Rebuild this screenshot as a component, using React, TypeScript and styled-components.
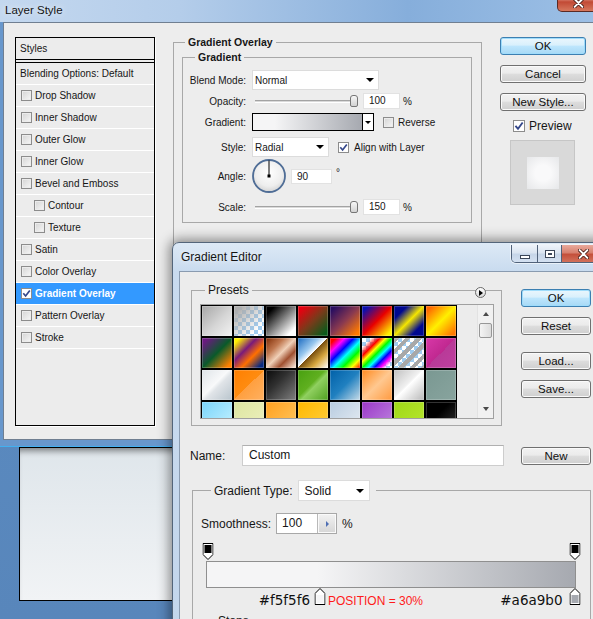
import styled, { createGlobalStyle } from "styled-components";

const GlobalStyle = createGlobalStyle`
  * { box-sizing: border-box; }
  html, body { margin: 0; padding: 0; }
  body {
    width: 593px;
    height: 619px;
    overflow: hidden;
    background: #5b8bc0;
    font-family: "Liberation Sans", Arial, sans-serif;
    color: #161616;
  }
`;

const checker = "repeating-conic-gradient(#9fcbef 0% 25%, #ffffff 0% 50%) 0 0 / 8px 8px";

const swatches: string[] = [
  "linear-gradient(135deg, #a6a6a6 0%, #d6d6d6 55%, #f3f3f3 100%)",
  `linear-gradient(135deg, #adadad 10%, rgba(173,173,173,0) 80%), ${checker}`,
  "linear-gradient(135deg, #000 15%, #fff 85%)",
  "linear-gradient(135deg, #e80010 10%, #7a3a1a 50%, #0a5a1a 90%)",
  "linear-gradient(135deg, #2a0e60 10%, #8a3a50 50%, #ff7a00 90%)",
  "linear-gradient(135deg, #0a10b0 10%, #e80000 50%, #fff000 90%)",
  "linear-gradient(135deg, #000890 22%, #f5e600 50%, #000890 78%)",
  "linear-gradient(135deg, #ff6a00 10%, #fff000 50%, #ff7a00 90%)",
  "linear-gradient(135deg, #6a1a80 10%, #0a5a2a 50%, #ff8000 90%)",
  "linear-gradient(135deg, #fff000 10%, #7a1a7a 38%, #ff7000 62%, #0a2a80 90%)",
  "linear-gradient(135deg, #8a3810 5%, #c07850 30%, #f0d0b8 50%, #a05030 70%, #f0d8c8 95%)",
  "linear-gradient(135deg, #1a6ac0 0%, #9ac8ee 35%, #fff 49%, #7a5010 50%, #d8a840 72%, #fff 100%)",
  "linear-gradient(135deg, #ff0000 10%, #ff00ff 25%, #0000ff 40%, #00ffff 55%, #00ff00 70%, #ffff00 85%, #ff0000 100%)",
  `linear-gradient(135deg, transparent 15%, #ff0000 30%, #ffff00 40%, #00ff00 50%, #00ffff 60%, #0000ff 70%, #ff00ff 80%, transparent 90%), ${checker}`,
  `repeating-linear-gradient(135deg, #a8a8a8 0px 4px, transparent 4px 8px), ${checker}`,
  "linear-gradient(135deg, #d838a8 0%, #c02890 50%, #b83a98 50%, #c040a0 100%)",
  "linear-gradient(135deg, #dfe4e8 0%, #f8f9fa 45%, #e0e4e8 55%, #b8c4cc 100%)",
  "linear-gradient(135deg, #ff7f00 0%, #ff8c10 50%, #ffa040 50%, #ffb060 100%)",
  "linear-gradient(135deg, #0a0a0a 0%, #303030 40%, #808080 100%)",
  "linear-gradient(135deg, #48a010 0%, #60b020 45%, #90d060 55%, #50a020 100%)",
  "linear-gradient(135deg, #0060a8 0%, #2080c0 50%, #c8dce8 100%)",
  "linear-gradient(135deg, #ff8a20 0%, #ffc890 50%, #ff9a40 100%)",
  "linear-gradient(135deg, #c0c0c0 0%, #f0f0f0 45%, #fff 50%, #b8b8b8 100%)",
  "linear-gradient(135deg, #7a9892, #88a49e)",
  "linear-gradient(135deg, #7ad4fa, #c8f4ff)",
  "linear-gradient(135deg, #dde6a0, #eef0c0)",
  "linear-gradient(135deg, #ffa020, #ffc860)",
  "linear-gradient(135deg, #ffb800, #ffd040)",
  "linear-gradient(135deg, #b8cce0, #e8eef4)",
  "linear-gradient(135deg, #9a38c8, #c088e0)",
  "linear-gradient(135deg, #a0d818, #b8e830)",
  "linear-gradient(135deg, #000 40%, #383838)",
];

const layerStyles = [
  { id: 1, label: "Drop Shadow", pad: 5 },
  { id: 2, label: "Inner Shadow", pad: 5 },
  { id: 3, label: "Outer Glow", pad: 5 },
  { id: 4, label: "Inner Glow", pad: 5 },
  { id: 5, label: "Bevel and Emboss", pad: 5 },
  { id: 6, label: "Contour", pad: 18 },
  { id: 7, label: "Texture", pad: 18 },
  { id: 8, label: "Satin", pad: 5 },
  { id: 9, label: "Color Overlay", pad: 5 },
  { id: 10, label: "Gradient Overlay", pad: 5, selected: true },
  { id: 11, label: "Pattern Overlay", pad: 5 },
  { id: 12, label: "Stroke", pad: 5 },
];

const Desktop = styled.div`
  position: relative;
  width: 593px;
  height: 619px;
  overflow: hidden;
  background: linear-gradient(180deg, #5d8fc5 0%, #5886bb 100%);
`;

const BackPanel = styled.div`
  position: absolute;
  left: 19px;
  top: 447px;
  width: 200px;
  height: 154px;
  border: 1px solid #000;
  background: linear-gradient(180deg, #dfe6eb 0%, #f1f3f5 100%);
  box-shadow: inset 0 7px 6px -4px rgba(0, 0, 0, 0.45);
`;

/* ---------- Layer Style window ---------- */

const LayerWindow = styled.div`
  position: absolute;
  left: 0;
  top: 0;
  width: 600px;
  height: 447px;
  display: flex;
  flex-direction: column;
  padding: 0 0 6px 3px;
  background:
    linear-gradient(90deg, #c4d8ef 0%, #b4cdea 30%, #86aedb 68%, #9dc0e6 100%) top / 100% 22px no-repeat,
    #6897cc;
  border-bottom: 1px solid #42b0f0;
`;

const LayerTitleBar = styled.div`
  height: 22px;
  display: flex;
  align-items: flex-start;
  justify-content: space-between;
`;

const WindowTitle = styled.span<{ $size: number; $lh: number }>`
  font-size: ${(p) => p.$size}px;
  line-height: ${(p) => p.$lh}px;
  padding-left: 2px;
  color: #141414;
  text-shadow: 0 0 6px rgba(255, 255, 255, 0.9);
`;

const LayerClose = styled.div`
  width: 43px;
  height: 21px;
  margin-top: -9px;
  display: flex;
  align-items: flex-end;
  justify-content: center;
  padding-bottom: 3px;
  border: 1px solid #5b2a24;
  border-top: none;
  border-radius: 0 0 5px 5px;
  background: linear-gradient(180deg, #e9a597 0%, #d2705e 45%, #c24a35 55%, #d6785e 100%);
`;

const LayerClient = styled.div`
  flex: 1;
  display: flex;
  align-items: flex-start;
  gap: 18px;
  padding: 14px 0 0 11px;
  background: #ededed;
  border: 1px solid #707f91;
  border-right: none;
`;

const StylesList = styled.div`
  width: 140px;
  height: 389px;
  flex: none;
  display: flex;
  flex-direction: column;
  border: 1px solid #000;
  box-shadow: 1px 1px 0 #fff;
  background: #ececec;
  font-size: 10px;
`;

const ListHeader = styled.div`
  height: 25px;
  padding-left: 4px;
  line-height: 21px;
  border-bottom: 4px double #000;
`;

const StyleRow = styled.div<{ $pad: number; $selected?: boolean }>`
  height: 22px;
  display: flex;
  align-items: center;
  gap: 3px;
  padding-left: ${(p) => p.$pad}px;
  border-bottom: 1px solid #fff;
  background: ${(p) => (p.$selected ? "#3399ff" : "transparent")};
  color: ${(p) => (p.$selected ? "#fff" : "#161616")};
  font-weight: ${(p) => (p.$selected ? 700 : 400)};
  white-space: nowrap;
`;

const CheckFrame = styled.span<{ $size: number; $white: boolean }>`
  width: ${(p) => p.$size}px;
  height: ${(p) => p.$size}px;
  flex: none;
  display: flex;
  align-items: center;
  justify-content: center;
  border: 1px solid #8c8c8c;
  background: ${(p) => (p.$white ? "#fff" : "linear-gradient(135deg, #d4d4d4, #f7f7f7)")};
  box-shadow: inset 0 0 0 1px ${(p) => (p.$white ? "#fff" : "#ececec")};
`;

const CheckBox = ({ checked = false, size = 11, white = false }: { checked?: boolean; size?: number; white?: boolean }) => (
  <CheckFrame $size={size} $white={white || checked}>
    {checked && (
      <svg width={size - 2} height={size - 2} viewBox="0 0 9 9">
        <path d="M1.3 4.3 L3.6 7 L7.8 1.4" fill="none" stroke="#34478a" strokeWidth="1.7" />
      </svg>
    )}
  </CheckFrame>
);

const Group = styled.fieldset`
  margin: 0;
  padding: 0;
  min-width: 0;
  border: 1px solid #a8a8a8;
`;

const GroupLegend = styled.legend<{ $ml: number; $bold?: boolean; $size: number; $lh: number }>`
  margin-left: ${(p) => p.$ml}px;
  padding: 0 3px;
  font-size: ${(p) => p.$size}px;
  line-height: ${(p) => p.$lh}px;
  font-weight: ${(p) => (p.$bold ? 700 : 400)};
  white-space: nowrap;
`;

const OverlayGroup = styled(Group)`
  width: 309px;
  flex: none;
  margin-top: -1px;
  padding-bottom: 30px;
`;

const GradientGroup = styled(Group)`
  margin: 3px 9px 0 8px;
`;

const GradientBody = styled.div`
  padding: 7px 0 7px 0;
  font-size: 10px;
`;

const FormRow = styled.div<{ $h: number; $mt?: number }>`
  height: ${(p) => p.$h}px;
  margin-top: ${(p) => p.$mt ?? 0}px;
  display: flex;
  align-items: center;
  white-space: nowrap;
`;

const FieldLabel = styled.span`
  width: 63px;
  margin-right: 6px;
  flex: none;
  text-align: right;
`;

const Select = styled.div<{ $w: number; $h: number; $pad: string }>`
  width: ${(p) => p.$w}px;
  height: ${(p) => p.$h}px;
  flex: none;
  display: flex;
  align-items: center;
  justify-content: space-between;
  padding: ${(p) => p.$pad};
  background: #fff;
  border: 1px solid #dcdcdc;
`;

const DropArrow = styled.span<{ $w: number }>`
  width: 0;
  height: 0;
  border-left: ${(p) => p.$w / 2}px solid transparent;
  border-right: ${(p) => p.$w / 2}px solid transparent;
  border-top: ${(p) => Math.round(p.$w / 2)}px solid #000;
`;

const Slider = styled.div`
  position: relative;
  width: 106px;
  height: 16px;
  flex: none;
`;

const SliderGroove = styled.div`
  position: absolute;
  left: 3px;
  right: 2px;
  top: 7px;
  height: 3px;
  border-top: 1px solid #a3a3a3;
  border-bottom: 1px solid #fff;
  background: #d9d9d9;
`;

const SliderThumb = styled.div`
  position: absolute;
  top: 2px;
  width: 8px;
  height: 12px;
  margin-left: -8px;
  border: 1px solid #767676;
  border-radius: 3px 3px 2px 2px;
  background: linear-gradient(180deg, #f7f7f7, #d2d2d2);
`;

const ValueBox = styled.div<{ $w: number; $h: number; $ml: number }>`
  width: ${(p) => p.$w}px;
  height: ${(p) => p.$h}px;
  margin-left: ${(p) => p.$ml}px;
  flex: none;
  padding-left: 5px;
  line-height: ${(p) => p.$h - 2}px;
  background: #fff;
  border: 1px solid #e2e2e2;
`;

const Unit = styled.span<{ $ml: number; $raise?: number }>`
  margin-left: ${(p) => p.$ml}px;
  margin-top: ${(p) => -(p.$raise ?? 0)}px;
`;

const GradientPicker = styled.div`
  width: 122px;
  height: 18px;
  flex: none;
  display: flex;
  border: 1px solid #000;
`;

const GradientSwatch = styled.div`
  flex: 1;
  border-right: 1px solid #000;
  background: linear-gradient(90deg, #f5f5f6 20%, #a6a9b0 100%);
`;

const PickerDrop = styled.div`
  width: 10px;
  display: flex;
  align-items: center;
  justify-content: center;
  background: #fff;
`;

const InlineCheck = styled.label<{ $ml: number; $gap: number }>`
  display: flex;
  align-items: center;
  gap: ${(p) => p.$gap}px;
  margin-left: ${(p) => p.$ml}px;
`;

const SideColumn = styled.div<{ $w: number; $ml?: number; $mt?: number }>`
  width: ${(p) => p.$w}px;
  flex: none;
  margin-left: ${(p) => p.$ml ?? 0}px;
  margin-top: ${(p) => p.$mt ?? 0}px;
  display: flex;
  flex-direction: column;
`;

const Button = styled.div<{ $default?: boolean; $mt?: number; $w?: number }>`
  width: ${(p) => (p.$w ? `${p.$w}px` : "100%")};
  height: 18px;
  flex: none;
  margin-top: ${(p) => p.$mt ?? 0}px;
  display: flex;
  align-items: center;
  justify-content: center;
  font-size: 11.5px;
  color: #101010;
  border: 1px solid ${(p) => (p.$default ? "#3c7fb1" : "#707070")};
  border-radius: 3px;
  background: ${(p) =>
    p.$default
      ? "linear-gradient(180deg, #eaf6fd 0%, #d9f0fc 45%, #bee6fd 50%, #a7d9f5 100%)"
      : "linear-gradient(180deg, #f2f2f2 0%, #ebebeb 45%, #dddddd 50%, #cfcfcf 100%)"};
  box-shadow: inset 0 0 0 1px ${(p) => (p.$default ? "#9fdcfb" : "#fafafa")};
`;

const PreviewRow = styled.label`
  height: 12px;
  margin-top: 9px;
  padding-left: 13px;
  display: flex;
  align-items: center;
  gap: 4px;
  font-size: 12px;
`;

const PreviewBox = styled.div`
  width: 65px;
  height: 65px;
  margin: 8px 0 0 10px;
  display: flex;
  align-items: center;
  justify-content: center;
  background: #d9d9d9;
  border: 1px solid #c6c6c6;
`;

const PreviewSquare = styled.div`
  width: 32px;
  height: 32px;
  background: radial-gradient(circle, #f9f9fa 35%, #e6e7e9 100%);
`;

/* ---------- Gradient Editor window ---------- */

const EditorWindow = styled.div`
  position: absolute;
  left: 172px;
  top: 242px;
  width: 440px;
  height: 400px;
  display: flex;
  flex-direction: column;
  padding: 0 6px 6px 6px;
  border: 1px solid #53657a;
  border-radius: 7px 7px 0 0;
  background: linear-gradient(180deg, #dde9f6 0px, #c9dbef 28px, #c3d6ec 100%);
  box-shadow: 0 0 12px 3px rgba(0, 0, 0, 0.42);
`;

const EditorTitleBar = styled.div`
  height: 28px;
  flex: none;
  display: flex;
  align-items: flex-start;
  justify-content: space-between;
`;

const CaptionGroup = styled.div`
  display: flex;
  height: 18px;
  margin-top: 2px;
  border: 1px solid #51627a;
  border-top: none;
  border-radius: 0 0 5px 5px;
  overflow: hidden;
  box-shadow: 0 0 0 1px rgba(255, 255, 255, 0.55);
`;

const CaptionButton = styled.div<{ $w: number; $close?: boolean }>`
  width: ${(p) => p.$w}px;
  display: flex;
  align-items: center;
  justify-content: center;
  background: ${(p) =>
    p.$close
      ? "linear-gradient(180deg, #e9a99c 0%, #d7816f 45%, #c4503b 55%, #d2705a 100%)"
      : "linear-gradient(180deg, #eef3fa 0%, #dbe5f1 45%, #c6d5e8 55%, #d4e1f1 100%)"};
  & + & {
    border-left: 1px solid #51627a;
  }
`;

const MinGlyph = styled.span`
  width: 10px;
  height: 4px;
  margin-top: 6px;
  border: 1px solid #3b4658;
  background: #fff;
`;

const MaxGlyph = styled.span`
  width: 10px;
  height: 8px;
  border: 1px solid #3b4658;
  background: #fff;
  box-shadow: inset 0 0 0 2px #fff, inset 0 0 0 3px #3b4658;
`;

const EditorClient = styled.div`
  flex: 1;
  display: flex;
  flex-direction: column;
  padding: 11px 0 0 11px;
  background: #ececec;
  border: 1px solid #8a9bb0;
  font-size: 12px;
`;

const TopSection = styled.div`
  display: flex;
  align-items: flex-start;
`;

const PresetsGroup = styled(Group)`
  width: 311px;
  height: 143px;
  flex: none;
`;

const PresetsBody = styled.div`
  position: relative;
  padding: 7px 0 0 8px;
`;

const MenuCircle = styled.div`
  position: absolute;
  top: -10px;
  right: 15px;
  width: 11px;
  height: 11px;
  display: flex;
  align-items: center;
  justify-content: center;
  padding-left: 1px;
  border: 1px solid #6a6a6a;
  border-radius: 50%;
  background: linear-gradient(180deg, #ffffff, #d8d8d8);
`;

const PresetsBox = styled.div`
  width: 294px;
  height: 115px;
  display: flex;
  justify-content: space-between;
  overflow: hidden;
  border: 1px solid #a0a0a0;
  background: #ececec;
`;

const SwatchGrid = styled.div`
  align-self: flex-start;
  display: grid;
  grid-template-columns: repeat(8, 30px);
  grid-auto-rows: 30px;
  gap: 2px;
  padding: 1px;
  background: #000;
`;

const Swatch = styled.div<{ $bg: string }>`
  background: ${(p) => p.$bg};
  box-shadow: inset 0 0 0 1px rgba(255, 255, 255, 0.2);
`;

const ScrollBar = styled.div`
  width: 16px;
  display: flex;
  flex-direction: column;
  background: #f1f1f1;
  border-left: 1px solid #e2e2e2;
`;

const ScrollArrow = styled.div<{ $up?: boolean }>`
  height: 18px;
  display: flex;
  align-items: center;
  justify-content: center;
  &::after {
    content: "";
    border-left: 3.5px solid transparent;
    border-right: 3.5px solid transparent;
    ${(p) => (p.$up ? "border-bottom: 4px solid #4a4a4a;" : "border-top: 4px solid #4a4a4a;")}
  }
`;

const ScrollThumb = styled.div`
  height: 15px;
  margin: 0 1px 0 1px;
  border: 1px solid #979797;
  border-radius: 2px;
  background: linear-gradient(90deg, #f4f4f4, #dcdcdc);
`;

const ScrollSpacer = styled.div`
  flex: 1;
`;

const NameRow = styled.div`
  height: 21px;
  margin-top: 19px;
  display: flex;
  align-items: center;
`;

const NameLabel = styled.span`
  width: 52px;
  margin-left: -1px;
`;

const NameInput = styled.div`
  width: 262px;
  height: 21px;
  padding-left: 6px;
  line-height: 19px;
  background: #fff;
  border: 1px solid #cdcdcd;
  border-top-color: #b0b0b0;
`;

const TypeGroup = styled(Group)`
  width: 399px;
  flex: 1;
  margin: 14px 0 0 1px;
`;

const TypeLegend = styled.legend`
  display: flex;
  align-items: center;
  gap: 5px;
  margin-left: 18px;
  padding: 0 6px 0 3px;
  white-space: nowrap;
`;

const TypeBody = styled.div`
  padding: 12px 0 0 8px;
`;

const SmoothRow = styled.div`
  height: 21px;
  display: flex;
  align-items: center;
`;

const SpinInput = styled.div`
  width: 61px;
  height: 21px;
  margin-left: 5px;
  display: flex;
  background: #fff;
  border: 1px solid #a8a8a8;
`;

const SpinValue = styled.span`
  flex: 1;
  padding-left: 5px;
  line-height: 19px;
`;

const SpinButton = styled.span`
  width: 19px;
  display: flex;
  align-items: center;
  justify-content: center;
  border-left: 1px solid #b9b9b9;
  background: linear-gradient(180deg, #f2f2f2, #d6d6d6);
  box-shadow: inset 0 0 0 1px #fafafa;
  &::after {
    content: "";
    border-top: 3px solid transparent;
    border-bottom: 3px solid transparent;
    border-left: 3px solid #4f6fb3;
  }
`;

const GradientArea = styled.div`
  width: 370px;
  margin: 9px 0 0 5px;
`;

const StopsRow = styled.div<{ $inset: string }>`
  position: relative;
  height: 18px;
  margin: ${(p) => p.$inset};
`;

const StopPin = styled.div<{ $at: number }>`
  position: absolute;
  top: 0;
  left: ${(p) => p.$at}%;
  width: 11px;
  height: 17px;
  transform: translateX(-50%);
  line-height: 0;
`;

const StopNote = styled.span<{ $side: "left" | "right"; $gap: number; $red?: boolean }>`
  position: absolute;
  bottom: -3px;
  ${(p) => (p.$side === "left" ? `right: calc(100% + ${p.$gap}px);` : `left: calc(100% + ${p.$gap}px);`)}
  white-space: nowrap;
  font-family: ${(p) => (p.$red ? '"Liberation Sans", Arial, sans-serif' : '"DejaVu Sans", Verdana, sans-serif')};
  font-size: ${(p) => (p.$red ? 12 : 13.5)}px;
  line-height: ${(p) => (p.$red ? 14 : 16)}px;
  color: ${(p) => (p.$red ? "#ff1a1a" : "#111")};
`;

const GradientBar = styled.div`
  height: 27px;
  border: 1px solid #8f8f8f;
  background: linear-gradient(90deg, #f5f5f6 30%, #a6a9b0 100%);
`;

const StopsGroup = styled(Group)`
  margin-top: 8px;
  height: 60px;
`;

const OpacityStop = () => (
  <svg width="11" height="17" viewBox="0 0 11 17">
    <path d="M0.5 0.5H10.5V11.5L5.5 16.5L0.5 11.5Z" fill="#fff" stroke="#000" />
    <rect x="2" y="2" width="7" height="8" fill="#000" />
  </svg>
);

const ColorStop = ({ color }: { color: string }) => (
  <svg width="11" height="17" viewBox="0 0 11 17">
    <path d="M5.5 0.5L10.5 5.5V16.5H0.5V5.5Z" fill="#fff" stroke="#000" />
    <rect x="2" y="7" width="7" height="8" fill={color} />
  </svg>
);

const CloseCross = ({ size }: { size: number }) => (
  <svg width={size} height={size - 1} viewBox="0 0 10 9">
    <path d="M1.5 1 L8.5 8 M8.5 1 L1.5 8" stroke="#4a1e18" strokeWidth="3.2" strokeLinecap="round" />
    <path d="M1.5 1 L8.5 8 M8.5 1 L1.5 8" stroke="#fff" strokeWidth="1.8" strokeLinecap="round" />
  </svg>
);

const AngleDial = () => (
  <svg width="34" height="34" viewBox="0 0 34 34">
    <defs>
      <radialGradient id="dialFace" cx="50%" cy="40%" r="60%">
        <stop offset="0%" stopColor="#ffffff" />
        <stop offset="70%" stopColor="#eeeeee" />
        <stop offset="100%" stopColor="#d4d4d4" />
      </radialGradient>
    </defs>
    <circle cx="17" cy="17" r="16" fill="url(#dialFace)" stroke="#4f6d96" strokeWidth="1.8" />
    <line x1="17" y1="17" x2="17" y2="1.5" stroke="#000" strokeWidth="1" />
    <rect x="15.5" y="15.5" width="3" height="3" fill="#000" />
  </svg>
);

const App = () => {
  const opacity = 100;
  const scale = 100;
  return (
    <Desktop>
      <GlobalStyle />
      <BackPanel />

      <LayerWindow>
        <LayerTitleBar>
          <WindowTitle $size={11.5} $lh={20}>Layer Style</WindowTitle>
          <LayerClose>
            <CloseCross size={11} />
          </LayerClose>
        </LayerTitleBar>
        <LayerClient>
          <StylesList>
            <ListHeader>Styles</ListHeader>
            <StyleRow $pad={4}>Blending Options: Default</StyleRow>
            {layerStyles.map((item) => (
              <StyleRow key={item.id} $pad={item.pad} $selected={item.selected}>
                <CheckBox checked={item.selected} />
                {item.label}
              </StyleRow>
            ))}
          </StylesList>

          <OverlayGroup>
            <GroupLegend $ml={11} $bold $size={10.5} $lh={12}>Gradient Overlay</GroupLegend>
            <GradientGroup>
              <GroupLegend $ml={12} $bold $size={10.5} $lh={12}>Gradient</GroupLegend>
              <GradientBody>
                <FormRow $h={20}>
                  <FieldLabel>Blend Mode:</FieldLabel>
                  <Select $w={127} $h={20} $pad="0 4px 0 2px">
                    Normal
                    <DropArrow $w={8} />
                  </Select>
                </FormRow>
                <FormRow $h={16} $mt={3}>
                  <FieldLabel>Opacity:</FieldLabel>
                  <Slider>
                    <SliderGroove />
                    <SliderThumb style={{ left: `${opacity}%` }} />
                  </Slider>
                  <ValueBox $w={37} $h={16} $ml={5}>100</ValueBox>
                  <Unit $ml={3}>%</Unit>
                </FormRow>
                <FormRow $h={18} $mt={4}>
                  <FieldLabel>Gradient:</FieldLabel>
                  <GradientPicker>
                    <GradientSwatch />
                    <PickerDrop>
                      <DropArrow $w={6} />
                    </PickerDrop>
                  </GradientPicker>
                  <InlineCheck $ml={9} $gap={4}>
                    <CheckBox />
                    Reverse
                  </InlineCheck>
                </FormRow>
                <FormRow $h={20} $mt={6}>
                  <FieldLabel>Style:</FieldLabel>
                  <Select $w={77} $h={20} $pad="0 4px 0 2px">
                    Radial
                    <DropArrow $w={8} />
                  </Select>
                  <InlineCheck $ml={9} $gap={5}>
                    <CheckBox checked />
                    Align with Layer
                  </InlineCheck>
                </FormRow>
                <FormRow $h={34} $mt={2}>
                  <FieldLabel>Angle:</FieldLabel>
                  <AngleDial />
                  <ValueBox $w={41} $h={15} $ml={5}>90</ValueBox>
                  <Unit $ml={4} $raise={8}>°</Unit>
                </FormRow>
                <FormRow $h={16} $mt={6}>
                  <FieldLabel>Scale:</FieldLabel>
                  <Slider>
                    <SliderGroove />
                    <SliderThumb style={{ left: `${scale}%` }} />
                  </Slider>
                  <ValueBox $w={37} $h={16} $ml={5}>150</ValueBox>
                  <Unit $ml={3}>%</Unit>
                </FormRow>
              </GradientBody>
            </GradientGroup>
          </OverlayGroup>

          <SideColumn $w={86}>
            <Button $default>OK</Button>
            <Button $mt={10}>Cancel</Button>
            <Button $mt={10}>New Style...</Button>
            <PreviewRow>
              <CheckBox checked size={12} />
              Preview
            </PreviewRow>
            <PreviewBox>
              <PreviewSquare />
            </PreviewBox>
          </SideColumn>
        </LayerClient>
      </LayerWindow>

      <EditorWindow>
        <EditorTitleBar>
          <WindowTitle $size={12} $lh={28}>Gradient Editor</WindowTitle>
          <CaptionGroup>
            <CaptionButton $w={25}>
              <MinGlyph />
            </CaptionButton>
            <CaptionButton $w={24}>
              <MaxGlyph />
            </CaptionButton>
            <CaptionButton $w={43} $close>
              <CloseCross size={11} />
            </CaptionButton>
          </CaptionGroup>
        </EditorTitleBar>

        <EditorClient>
          <TopSection>
            <PresetsGroup>
              <GroupLegend $ml={13} $size={12} $lh={14}>Presets</GroupLegend>
              <PresetsBody>
                <MenuCircle>
                  <svg width="4" height="6" viewBox="0 0 4 6">
                    <path d="M0 0 L4 3 L0 6 Z" fill="#000" />
                  </svg>
                </MenuCircle>
                <PresetsBox>
                  <SwatchGrid>
                    {swatches.map((bg, i) => (
                      <Swatch key={i} $bg={bg} />
                    ))}
                  </SwatchGrid>
                  <ScrollBar>
                    <ScrollArrow $up />
                    <ScrollThumb />
                    <ScrollSpacer />
                    <ScrollArrow />
                  </ScrollBar>
                </PresetsBox>
              </PresetsBody>
            </PresetsGroup>

            <SideColumn $w={70} $ml={19} $mt={6}>
              <Button $default>OK</Button>
              <Button $mt={10}>Reset</Button>
              <Button $mt={17}>Load...</Button>
              <Button $mt={10}>Save...</Button>
            </SideColumn>
          </TopSection>

          <NameRow>
            <NameLabel>Name:</NameLabel>
            <NameInput>Custom</NameInput>
            <Button $w={70} style={{ marginLeft: 17 }}>New</Button>
          </NameRow>

          <TypeGroup>
            <TypeLegend>
              Gradient Type:
              <Select $w={72} $h={21} $pad="0 5px 0 6px">
                Solid
                <DropArrow $w={8} />
              </Select>
            </TypeLegend>
            <TypeBody>
              <SmoothRow>
                Smoothness:
                <SpinInput>
                  <SpinValue>100</SpinValue>
                  <SpinButton />
                </SpinInput>
                <Unit $ml={5}>%</Unit>
              </SmoothRow>

              <GradientArea>
                <StopsRow $inset="0 1.5px">
                  <StopPin $at={0}>
                    <OpacityStop />
                  </StopPin>
                  <StopPin $at={100}>
                    <OpacityStop />
                  </StopPin>
                </StopsRow>
                <GradientBar />
                <StopsRow $inset="0 1px 0 4px">
                  <StopPin $at={30}>
                    <ColorStop color="#f5f5f6" />
                    <StopNote $side="left" $gap={4}>#f5f5f6</StopNote>
                    <StopNote $side="right" $gap={3} $red>POSITION = 30%</StopNote>
                  </StopPin>
                  <StopPin $at={100}>
                    <ColorStop color="#a6a9b0" />
                    <StopNote $side="left" $gap={7}>#a6a9b0</StopNote>
                  </StopPin>
                </StopsRow>
              </GradientArea>

              <StopsGroup>
                <GroupLegend $ml={13} $size={12} $lh={14}>Stops</GroupLegend>
              </StopsGroup>
            </TypeBody>
          </TypeGroup>
        </EditorClient>
      </EditorWindow>
    </Desktop>
  );
};

export default App;
